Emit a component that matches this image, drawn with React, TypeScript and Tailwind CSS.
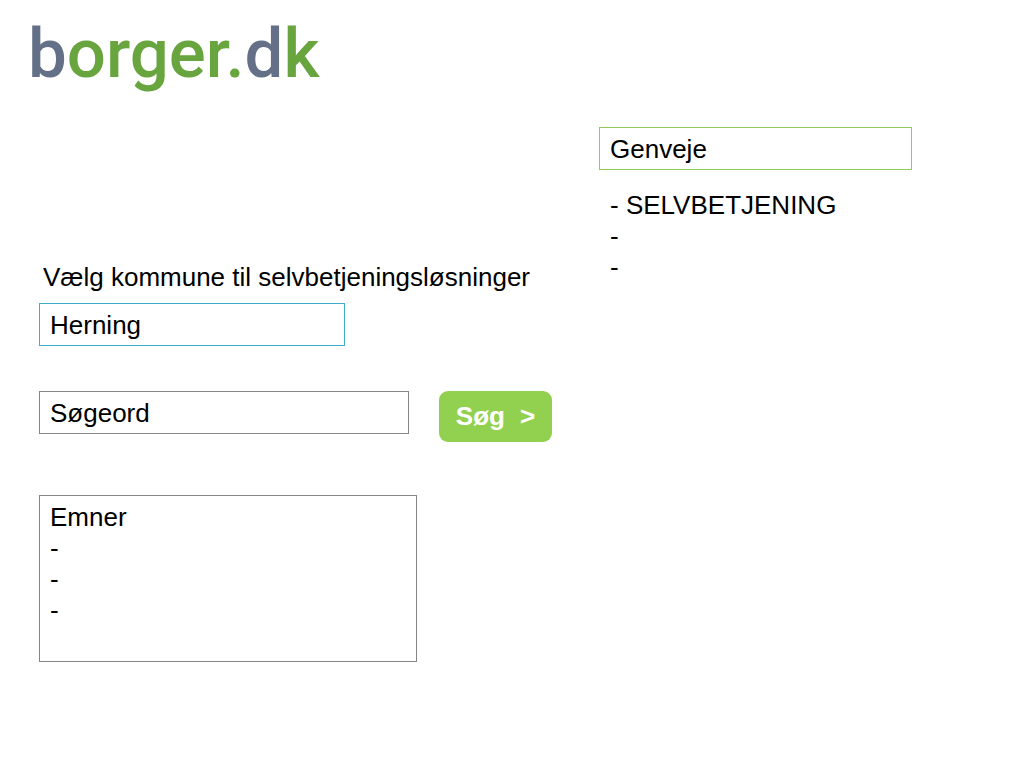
import { useState } from "react";

const emptyTopics = ["topic-1", "topic-2", "topic-3"];

function Logo() {
  return (
    <a
      href="#"
      className="inline-block font-['Roboto',sans-serif] text-[69px] leading-[80px] font-medium text-[#68a53e]"
    >
      <span className="text-[#647087]">b</span>orger.
      <span className="text-[#647087]">d</span>k
    </a>
  );
}

function SearchForm() {
  const [municipality, setMunicipality] = useState("Herning");
  const [query, setQuery] = useState("Søgeord");

  return (
    <form onSubmit={(event) => event.preventDefault()}>
      <label htmlFor="municipality" className="block pl-1">
        Vælg kommune til selvbetjeningsløsninger
      </label>
      <select
        id="municipality"
        value={municipality}
        onChange={(event) => setMunicipality(event.target.value)}
        className="mt-[10px] block h-[43px] w-[306px] max-w-full appearance-none border border-[#3fabcb] bg-white px-[10px] pt-[2px]"
      >
        <option>Herning</option>
      </select>
      <div className="mt-[45px] flex items-start gap-[30px]">
        <input
          type="text"
          aria-label="Søgeord"
          value={query}
          onChange={(event) => setQuery(event.target.value)}
          className="h-[43px] w-[370px] min-w-0 border border-[#868686] bg-white px-[10px] pt-[2px]"
        />
        <button
          type="submit"
          className="flex h-[51px] w-[113px] shrink-0 items-center justify-center gap-[15px] rounded-[9px] bg-[#92d050] font-bold text-white"
        >
          <span>Søg</span>
          <span>&gt;</span>
        </button>
      </div>
    </form>
  );
}

function Topics() {
  return (
    <section className="mt-[53px] h-[167px] w-[378px] max-w-full border border-[#868686] px-[10px] py-[6px]">
      <h2>Emner</h2>
      <ul>
        {emptyTopics.map((topic) => (
          <li key={topic}>-</li>
        ))}
      </ul>
    </section>
  );
}

function Shortcuts() {
  return (
    <aside className="w-[313px]">
      <h2 className="border border-[#92c95c] px-[10px] pt-[6px] pb-1">Genveje</h2>
      <ul className="mt-5 px-[11px]">
        <li>
          - <a href="#">SELVBETJENING</a>
        </li>
        <li>-</li>
        <li>-</li>
      </ul>
    </aside>
  );
}

export default function App() {
  return (
    <div className="min-h-screen bg-white font-['Liberation_Sans',Arial,sans-serif] text-[26px] leading-[31px] text-black">
      <header className="px-7 pt-[14px]">
        <Logo />
      </header>
      <div className="flex flex-wrap items-start gap-x-[47px] px-[39px] pt-[33px]">
        <main className="w-[513px] max-w-full pt-[135px]">
          <SearchForm />
          <Topics />
        </main>
        <Shortcuts />
      </div>
    </div>
  );
}
